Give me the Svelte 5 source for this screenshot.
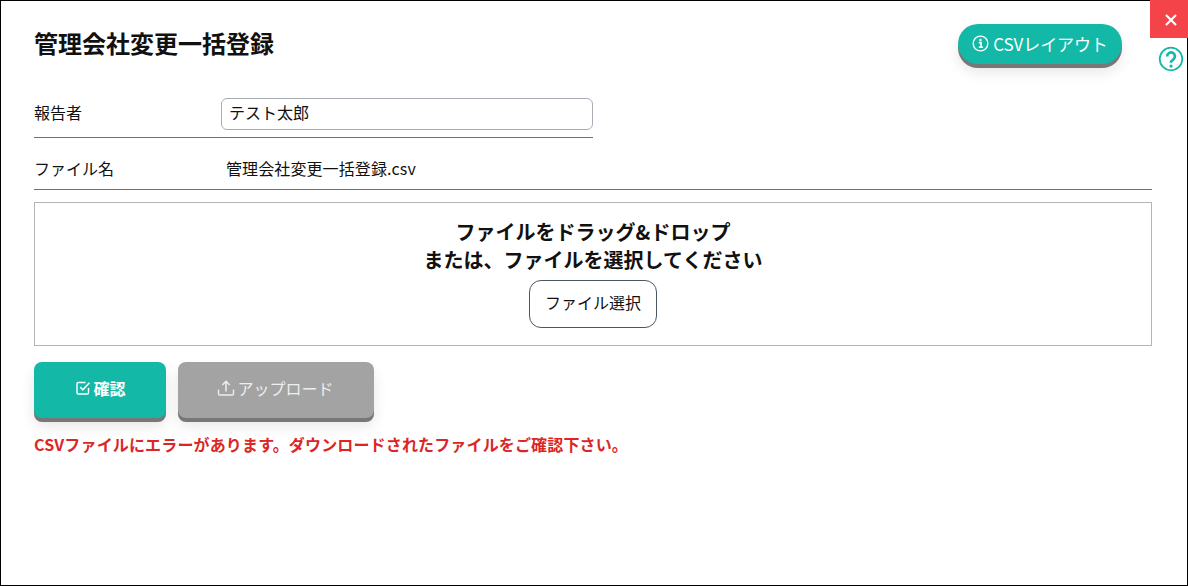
<script lang="ts">
  let reporter = 'テスト太郎';
</script>

<div class="dialog">
  <button class="close" aria-label="閉じる">
    <svg viewBox="0 0 14 14" width="14" height="14"><path d="M2 2L12 12M12 2L2 12" stroke="#fff" stroke-width="2.2" fill="none" /></svg>
  </button>
  <div class="help">
    <svg viewBox="0 0 24 24" width="26" height="26">
      <circle cx="12" cy="12" r="10.4" fill="none" stroke="#14b8a6" stroke-width="1.6" />
      <path d="M8.4 9.6a3.6 3.6 0 1 1 5.8 2.8c-1.4 1-2.2 1.5-2.2 3" fill="none" stroke="#14b8a6" stroke-width="2.5" />
      <circle cx="12" cy="18.5" r="1.5" fill="#14b8a6" />
    </svg>
  </div>

  <header class="head">
    <h1>管理会社変更一括登録</h1>
    <button class="layout-btn">
      <svg viewBox="0 0 16 16" width="17" height="17">
        <circle cx="8" cy="8" r="6.9" fill="none" stroke="#fff" stroke-width="1.3" />
        <path d="M6.4 7.2H8.5V11.6M6.4 11.6H10.4" fill="none" stroke="#fff" stroke-width="1.5" />
        <circle cx="8" cy="4.7" r="1.1" fill="#fff" />
      </svg>
      CSVレイアウト
    </button>
  </header>

  <div class="row reporter">
    <span class="label">報告者</span>
    <input type="text" bind:value={reporter} />
  </div>
  <div class="row file">
    <span class="label">ファイル名</span>
    <span class="filename">管理会社変更一括登録.csv</span>
  </div>

  <div class="drop">
    <p>ファイルをドラッグ&ドロップ<br />または、ファイルを選択してください</p>
    <button class="pick">ファイル選択</button>
  </div>

  <div class="actions">
    <button class="action confirm">
      <svg viewBox="0 0 16 16" width="16" height="16">
        <path d="M13.5 8v4.8a1.2 1.2 0 0 1-1.2 1.2H3.2A1.2 1.2 0 0 1 2 12.8V3.7a1.2 1.2 0 0 1 1.2-1.2h7.3" fill="none" stroke="#fff" stroke-width="1.4" />
        <path d="M5.2 7l2.6 2.8L14.4 2.8" fill="none" stroke="#fff" stroke-width="1.6" />
      </svg>
      確認
    </button>
    <button class="action upload">
      <svg viewBox="0 0 18 18" width="18" height="18">
        <path d="M1.5 10.5v4.2a1.3 1.3 0 0 0 1.3 1.3h12.4a1.3 1.3 0 0 0 1.3-1.3v-4.2" fill="none" stroke="#eee" stroke-width="1.4" />
        <path d="M9 12.5V2.5M5.3 6L9 2.3 12.7 6" fill="none" stroke="#eee" stroke-width="1.5" />
      </svg>
      アップロード
    </button>
  </div>

  <p class="error">CSVファイルにエラーがあります。ダウンロードされたファイルをご確認下さい。</p>
</div>

<style>
  :global(body) {
    margin: 0;
    background: #fff;
  }

  .dialog {
    position: relative;
    box-sizing: border-box;
    width: 1188px;
    height: 586px;
    padding: 0 35px 0 33px;
    border: 1px solid #000;
    background: #fff;
    color: #111;
    font-family: "Noto Sans CJK JP", "Noto Sans", sans-serif;
    font-size: 16px;
  }

  button {
    font-family: inherit;
    cursor: pointer;
  }

  .close {
    position: absolute;
    top: -1px;
    right: -1px;
    display: flex;
    align-items: center;
    justify-content: center;
    width: 38px;
    height: 38px;
    padding: 1px 0 0 3px;
    border: none;
    background: #f4444a;
  }

  .help {
    position: absolute;
    top: 45px;
    right: 3px;
    display: flex;
  }

  .head {
    display: flex;
    align-items: flex-start;
    justify-content: space-between;
    height: 97px;
    padding-right: 30px;
  }

  h1 {
    margin: 26px 0 0;
    font-size: 24px;
    line-height: 32px;
    font-weight: 700;
    color: #111;
  }

  .layout-btn {
    display: flex;
    align-items: center;
    justify-content: center;
    gap: 4px;
    width: 164px;
    height: 40px;
    margin-top: 23px;
    padding: 0 0 2px;
    border: none;
    border-radius: 20px;
    background: #14b8a6;
    color: #fff;
    font-size: 17px;
    letter-spacing: -0.1px;
    box-shadow: 0 4px 0 #777, 0 8px 14px rgba(0, 0, 0, 0.1);
  }

  .row {
    display: flex;
    align-items: center;
    box-sizing: border-box;
    border-bottom: 1px solid #6b7280;
  }

  .reporter {
    width: 559px;
    height: 40px;
    padding-bottom: 8px;
  }

  .reporter .label {
    padding-bottom: 4px;
  }

  .file {
    height: 52px;
    padding-top: 11px;
  }

  .file .label,
  .filename {
    padding-bottom: 2px;
  }

  .label {
    width: 187px;
    flex: none;
  }

  input {
    box-sizing: border-box;
    width: 372px;
    height: 32px;
    padding: 0 7px 4px;
    border: 1px solid #a8adb5;
    border-radius: 6px;
    font: inherit;
    color: #111;
    outline: none;
  }

  .filename {
    margin-left: 5px;
    letter-spacing: 0.1px;
  }

  .drop {
    box-sizing: border-box;
    display: flex;
    flex-direction: column;
    align-items: center;
    height: 144px;
    margin-top: 12px;
    padding-top: 15px;
    border: 1px solid #b5b5b5;
  }

  .drop p {
    margin: 0;
    text-align: center;
    font-size: 20px;
    line-height: 28px;
    font-weight: 700;
    color: #111;
  }

  .pick {
    width: 128px;
    height: 48px;
    margin-top: 6px;
    padding: 0 0 4px;
    border: 1px solid #4b5563;
    border-radius: 12px;
    background: #fff;
    color: #111;
    font-size: 16px;
  }

  .actions {
    display: flex;
    gap: 12px;
    margin-top: 16px;
  }

  .action {
    display: flex;
    align-items: center;
    justify-content: center;
    gap: 2px;
    height: 56px;
    padding: 0 0 4px;
    border: none;
    border-radius: 8px;
    color: #fff;
    font-size: 16px;
    box-shadow: 0 4px 0 #777, 0 8px 14px rgba(0, 0, 0, 0.1);
  }

  .confirm {
    width: 132px;
    padding-left: 1px;
    background: #14b8a6;
    font-weight: 700;
  }

  .upload {
    width: 196px;
    padding-right: 1px;
    background: #a3a3a3;
    color: #eee;
  }

  .error {
    margin: 15px 0 0;
    font-size: 16px;
    line-height: 22px;
    letter-spacing: 0.15px;
    font-weight: 700;
    color: #dc2626;
  }
</style>
